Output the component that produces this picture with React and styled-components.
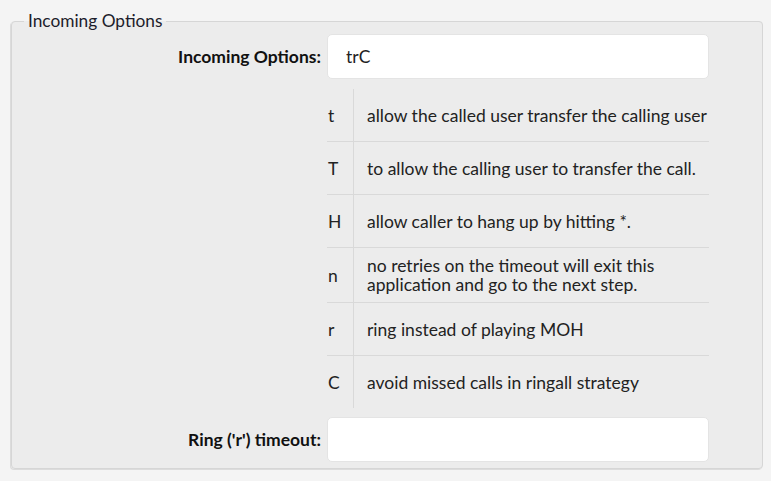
import React from "react";
import styled, { createGlobalStyle } from "styled-components";

const Global = createGlobalStyle`
  html, body { margin: 0; padding: 0; background: #f4f4f4; }
  body { font-family: Lato, "Open Sans", sans-serif; color: #1f1f1f; }
  * { box-sizing: border-box; }
`;

const Page = styled.div`
  padding: 12px 8px 10px 11px;
`;

const Fieldset = styled.fieldset`
  margin: 0;
  width: 752px;
  background: #ececec;
  border: 1px solid #d6d6d6;
  border-radius: 4px;
  box-shadow: -1px 1px 0 #dcdcdc;
  padding: 4px 53px 6px 0;
`;

const Legend = styled.legend`
  margin-left: 12px;
  padding: 0 4px;
  font-size: 17.3px;
  line-height: 18px;
  color: #1d1d2b;
`;

const Grid = styled.div`
  display: grid;
  grid-template-columns: 1fr 382px;
  column-gap: 6px;
  row-gap: 9px;
  align-items: center;
`;

const Label = styled.label`
  justify-self: end;
  font-weight: 700;
  font-size: 17.5px;
  color: #111;
`;

const Input = styled.input`
  height: 45px;
  width: 100%;
  border: 1px solid #e4e4e4;
  border-radius: 5px;
  background: #fff;
  padding: 0 18px;
  font-family: Lato, sans-serif;
  font-size: 17.5px;
  color: #222;
  outline: none;
`;

const Table = styled.div`
  grid-column: 2;
  display: flex;
  flex-direction: column;
`;

const Row = styled.div`
  display: grid;
  grid-template-columns: 26px 1fr;
  min-height: 53px;
  border-top: 1px solid ${(p) => (p.$first ? "transparent" : "#d9d9d9")};
`;

const Key = styled.div`
  display: flex;
  align-items: center;
  padding-left: 1px;
  font-size: 17.5px;
  color: #222;
`;

const Desc = styled.div`
  display: flex;
  align-items: center;
  border-left: 1px solid #d9d9d9;
  padding: 8px 0 8px 13px;
  font-size: 17.5px;
  line-height: 19px;
  color: #222;
`;

const options = [
  ["t", "allow the called user transfer the calling user"],
  ["T", "to allow the calling user to transfer the call."],
  ["H", "allow caller to hang up by hitting *."],
  ["n", "no retries on the timeout will exit this application and go to the next step."],
  ["r", "ring instead of playing MOH"],
  ["C", "avoid missed calls in ringall strategy"],
];

export default function App() {
  return (
    <>
      <Global />
      <Page>
        <Fieldset>
          <Legend>Incoming Options</Legend>
          <Grid>
            <Label>Incoming Options:</Label>
            <Input defaultValue="trC" />
            <Table>
              {options.map(([k, d], i) => (
                <Row key={k} $first={i === 0}>
                  <Key>{k}</Key>
                  <Desc>{d}</Desc>
                </Row>
              ))}
            </Table>
            <Label>Ring ('r') timeout:</Label>
            <Input defaultValue="" />
          </Grid>
        </Fieldset>
      </Page>
    </>
  );
}
